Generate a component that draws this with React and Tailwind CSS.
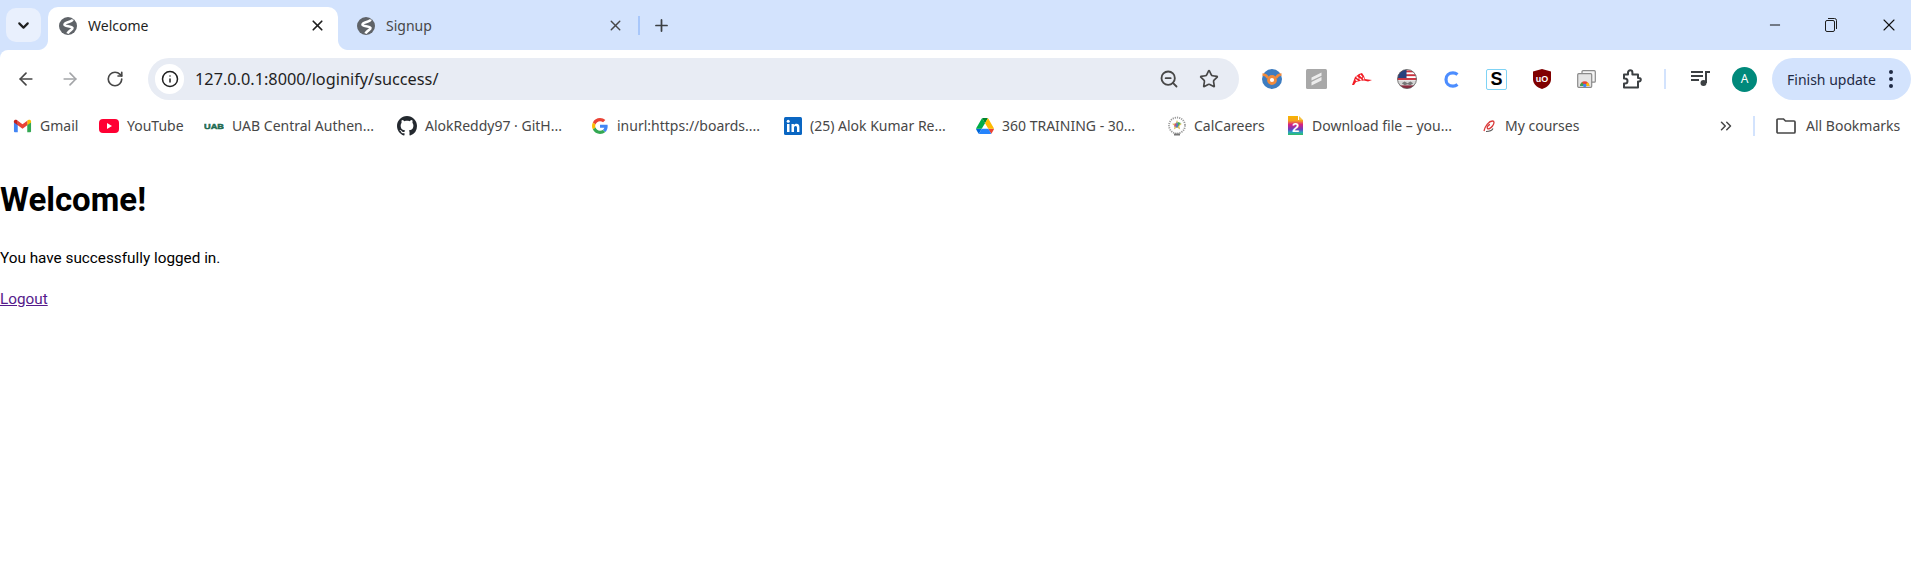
import React from "react";
import { ArrowLeft, ArrowRight, RotateCw, Info, ZoomOut, Star, X, Plus, ChevronDown, ChevronsRight, Minus } from "lucide-react";

const Globe = () => (
  <svg width="18" height="18" viewBox="0 0 18 18" className="shrink-0">
    <circle cx="9" cy="9" r="9" fill="#5f6368" />
    <path d="M13.500 2.500C13 5.500 6 4.500 5.500 7.500 5.200 10 12.500 8.500 13.500 11 13.800 13 10 13 8.500 16.500" fill="none" stroke="#fff" strokeWidth="2.600" />
  </svg>
);

const Gmail = () => (
  <svg width="19" height="14" viewBox="0 0 20 16" preserveAspectRatio="none">
    <path d="M1 15V3l4 3v9H2a1 1 0 0 1-1-1z" fill="#4285f4" />
    <path d="M19 15V3l-4 3v9h3a1 1 0 0 0 1-1z" fill="#34a853" />
    <path d="M15 1.800V7l4-3V2.500C19 1 17.200.3 16 1.200z" fill="#fbbc04" />
    <path d="M5 7V2l5 4 5-4v5l-5 4z" fill="#ea4335" />
    <path d="M1 2.500V4l4 3V2L4 1.200C2.800.3 1 1 1 2.500z" fill="#c5221f" />
  </svg>
);

const YouTube = () => (
  <svg width="20" height="14" viewBox="0 0 20 14">
    <rect width="20" height="14" rx="4" fill="#ff0033" />
    <path d="M8 4l5 3-5 3z" fill="#fff" />
  </svg>
);

const Uab = () => (
  <svg width="20" height="9" viewBox="0 0 20 9">
    <text x="10" y="7.500" textAnchor="middle" fontSize="8" fontWeight="900" fontFamily="Liberation Sans" fill="#1e6b52" stroke="#1e6b52" strokeWidth="0.500" textLength="20" lengthAdjust="spacingAndGlyphs">UAB</text>
  </svg>
);

const Github = () => (
  <svg width="20" height="20" viewBox="0 0 16 16" fill="#24292f">
    <path d="M8 0C3.580 0 0 3.580 0 8c0 3.540 2.290 6.530 5.470 7.590.4.070.55-.17.55-.38 0-.19-.01-.82-.01-1.490-2.010.37-2.530-.49-2.690-.94-.09-.23-.48-.94-.82-1.130-.28-.15-.68-.52-.01-.53.63-.01 1.080.58 1.230.82.72 1.210 1.870.87 2.330.66.070-.52.28-.87.51-1.070-1.780-.2-3.640-.89-3.640-3.950 0-.87.31-1.590.82-2.150-.08-.2-.36-1.020.08-2.120 0 0 .67-.21 2.200.82.64-.18 1.320-.27 2-.27s1.360.09 2 .27c1.530-1.040 2.200-.82 2.200-.82.44 1.100.16 1.920.08 2.120.51.56.82 1.270.82 2.150 0 3.070-1.870 3.750-3.650 3.950.29.25.54.73.54 1.480 0 1.070-.01 1.930-.01 2.200 0 .21.15.46.55.38A8.010 8.010 0 0 0 16 8c0-4.420-3.580-8-8-8z" />
  </svg>
);

const Google = () => (
  <svg width="16" height="16" viewBox="0 0 48 48">
    <path fill="#EA4335" d="M24 9.500c3.500 0 6.700 1.200 9.200 3.600l6.900-6.900C35.900 2.400 30.500 0 24 0 14.600 0 6.500 5.400 2.600 13.200l8 6.200C12.500 13.700 17.800 9.500 24 9.500z" />
    <path fill="#4285F4" d="M47 24.500c0-1.600-.2-3.100-.4-4.500H24v9h12.900c-.6 3-2.200 5.500-4.700 7.200l7.700 6c4.500-4.200 7.100-10.300 7.100-17.700z" />
    <path fill="#FBBC05" d="M10.500 28.600c-.5-1.400-.8-3-.8-4.600s.3-3.200.8-4.600l-8-6.200C.9 16.500 0 20.100 0 24s.9 7.500 2.600 10.800l7.900-6.200z" />
    <path fill="#34A853" d="M24 48c6.500 0 11.900-2.100 15.900-5.800l-7.700-6c-2.200 1.400-4.900 2.300-8.200 2.300-6.200 0-11.500-4.200-13.400-9.900l-8 6.200C6.500 42.600 14.600 48 24 48z" />
  </svg>
);

const LinkedIn = () => (
  <svg width="18" height="18" viewBox="0 0 18 18">
    <rect width="18" height="18" rx="1.500" fill="#0a66c2" />
    <rect x="3" y="7" width="2.500" height="8" fill="#fff" />
    <circle cx="4.200" cy="4.300" r="1.500" fill="#fff" />
    <path d="M7.500 7h2.400v1.200c.5-.8 1.400-1.400 2.600-1.400 2.200 0 2.900 1.400 2.900 3.500V15H13v-4.100c0-1-.3-1.900-1.400-1.900s-1.600.9-1.600 2V15H7.500z" fill="#fff" />
  </svg>
);

const Drive = () => (
  <svg width="18" height="16" viewBox="0 0 87 78">
    <path d="M6.600 66.900l3.900 6.700c.8 1.400 1.900 2.500 3.200 3.300L27.500 53H0c0 1.600.4 3.100 1.200 4.500z" fill="#0066da" />
    <path d="M43.600 25L29.900 1.200c-1.300.8-2.500 1.900-3.300 3.300L1.200 48.500C.4 49.900 0 51.400 0 53h27.500z" fill="#00ac47" />
    <path d="M73.500 76.800c1.300-.8 2.400-1.900 3.200-3.300l1.600-2.800 7.700-13.200c.8-1.400 1.200-2.900 1.200-4.500H59.700l5.900 11.500z" fill="#ea4335" />
    <path d="M43.600 25L57.400 1.200C56 .4 54.500 0 52.900 0H34.400c-1.600 0-3.100.4-4.500 1.200z" fill="#00832d" />
    <path d="M59.800 53H27.500L13.700 76.800c1.400.8 2.900 1.200 4.500 1.200h50.800c1.600 0 3.100-.4 4.500-1.200z" fill="#2684fc" />
    <path d="M73.400 26.500L60.700 4.500c-.8-1.400-1.900-2.500-3.300-3.300L43.600 25l16.200 28h27.500c0-1.600-.4-3.100-1.200-4.500z" fill="#ffba00" />
  </svg>
);

const CalCareers = () => (
  <svg width="18" height="20" viewBox="0 0 18 20">
    <circle cx="9" cy="9.500" r="8" fill="#fff" stroke="#9a9a9a" strokeWidth="1.800" strokeDasharray="1.200 1" />
    <path d="M9 4l1.500 3.500 3.500.3-2.700 2.300.9 3.400L9 11.600 5.800 13.500l.9-3.400L4 7.800l3.500-.3z" fill="#e0c060" />
    <path d="M9 6l2 3-2 3-2-2z" fill="#4a7fc1" />
    <path d="M7 7l2 2-3 2z" fill="#d04a7a" />
    <path d="M10 6l3 1-3 3z" fill="#4caf50" />
    <rect x="6" y="17.500" width="6" height="2" fill="#777" />
  </svg>
);

const Download2 = () => (
  <svg width="15" height="19" viewBox="0 0 15 19">
    <defs>
      <linearGradient id="dl" x1="0" y1="0" x2="0" y2="1">
        <stop offset="0" stopColor="#f7b500" />
        <stop offset="0.25" stopColor="#f5a020" />
        <stop offset="0.45" stopColor="#d9207f" />
        <stop offset="0.7" stopColor="#6a3fc0" />
        <stop offset="0.85" stopColor="#2aa5c0" />
        <stop offset="1" stopColor="#30c060" />
      </linearGradient>
    </defs>
    <path d="M0 0h10l5 4v15H0z" fill="url(#dl)" />
    <path d="M10 0h5v4h-5z" fill="#fff" />
    <path d="M11 0l4 4h-4z" fill="#f5c040" />
    <text x="7.500" y="15.500" textAnchor="middle" fontSize="13" fontWeight="700" fontFamily="Liberation Sans" fill="#fff">2</text>
  </svg>
);

const Courses = () => (
  <svg width="14" height="14" viewBox="0 0 14 14" fill="none">
    <path d="M2 12C3 7 7 2 10.500 2c2 0 2 2.500 0 5-1.500 2-4 3.500-5 2.500S6 6 8 5.500" stroke="#d93a3a" strokeWidth="1.300" />
    <path d="M4 12.500c3 0 6-1 7-3" stroke="#555" strokeWidth="1.100" />
  </svg>
);

const ExtOrange = () => (
  <svg width="20" height="20" viewBox="0 0 20 20">
    <circle cx="10" cy="10" r="10" fill="#3d7cc0" />
    <path d="M0.500 5.500C3 5.500 5 7 6 9M19.500 5.500C17 5.500 15 7 14 9" stroke="#f08a3c" strokeWidth="2.600" fill="none" />
    <circle cx="10" cy="11" r="3.500" fill="#fff" stroke="#f08a3c" strokeWidth="2.800" />
  </svg>
);

const ExtGray = () => (
  <svg width="21" height="20" viewBox="0 0 21 20">
    <rect width="21" height="20" rx="1.500" fill="#a8a8a8" />
    <path d="M5.500 8.500L15.500 3.500v3.200L5.500 11.500zM5.500 13L15.500 8v3.500L5.500 16.500z" fill="#ececec" />
  </svg>
);

const ExtFlag = () => (
  <svg width="20" height="12" viewBox="0 0 20 12">
    <path d="M0 12L3 4 7 1 10 0l2 3 1 3 3 .5L20 7l-4 1.500-4-1-4 .5-4 1-2 3z" fill="#f21c24" />
    <path d="M4.500 3.500l2 2M8 2l2 2M3.500 6.500l2 1.500M7.500 5.500l2 2M11 4.500l1 2" stroke="#fff" strokeWidth="1.100" />
  </svg>
);

const ExtUs = () => (
  <svg width="20" height="20" viewBox="0 0 21 21">
    <defs><clipPath id="usc"><circle cx="10.500" cy="10.500" r="10" /></clipPath></defs>
    <g clipPath="url(#usc)">
      <rect width="21" height="21" fill="#fff" />
      <rect y="1.500" width="21" height="2" fill="#c8313e" />
      <rect y="5.500" width="21" height="2" fill="#c8313e" />
      <rect y="9.500" width="21" height="2" fill="#c8313e" />
      <rect y="17" width="21" height="4" fill="#8c2a3e" />
      <rect width="10" height="9.500" fill="#27407e" />
      <rect y="12" width="21" height="5" fill="#d5d5d5" />
      <path d="M5 15l3-2 3 2 3-2 3 2-3 2-3-1-3 1z" fill="#777" />
    </g>
    <circle cx="10.500" cy="10.500" r="10" fill="none" stroke="#555" strokeWidth="0.800" />
  </svg>
);

const ExtC = () => (
  <svg width="15" height="17" viewBox="0 0 15 17" fill="none">
    <path d="M13.500 3.500C12 2.300 10.500 1.800 9 1.800 5 1.800 2 4.500 2 8.500s3 6.700 7 6.700c1.500 0 3-.5 4.500-1.700" stroke="#4c8dff" strokeWidth="3.200" />
  </svg>
);

const ExtS = () => (
  <div className="w-[21px] h-[21px] rounded-[2px] border border-[#7fd3f5] bg-white flex items-center justify-center">
    <span className="font-['Liberation_Sans',sans-serif] font-bold text-[18px] leading-none text-black">S</span>
  </div>
);

const ExtUo = () => (
  <svg width="18" height="20" viewBox="0 0 19 23" preserveAspectRatio="none">
    <path d="M9.500 0L19 3v9c0 5-4 9-9.500 11C4 21 0 17 0 12V3z" fill="#800000" />
    <text x="9.500" y="14.500" textAnchor="middle" fontSize="9.500" fontWeight="700" fontFamily="Liberation Sans" fill="#fff">uO</text>
  </svg>
);

const ExtChrome = () => (
  <svg width="19" height="18" viewBox="0 0 19 18">
    <rect x="5" y="0.700" width="13.300" height="11.500" rx="1" fill="#f4f4f4" stroke="#8a8a8a" strokeWidth="1.200" />
    <rect x="0.700" y="3.700" width="14" height="13.600" rx="1" fill="#e4e4e4" stroke="#8a8a8a" strokeWidth="1.200" />
    <path d="M3 16a4.700 4.700 0 0 1 9.400 0z" fill="#ea4335" />
    <path d="M3 16a4.700 4.700 0 0 1 2-3.800L7.700 16z" fill="#34a853" />
    <path d="M12.400 16a4.700 4.700 0 0 0-1.800-3.700L7.700 16z" fill="#fbbc04" />
    <circle cx="7.700" cy="15.500" r="1.700" fill="#4285f4" />
  </svg>
);

const ExtPuzzle = () => (
  <svg width="20" height="20" viewBox="0 0 20 20" fill="none" stroke="#3c4043" strokeWidth="2" strokeLinejoin="round">
    <path d="M2 5.500H6V3.500a2.200 2.200 0 0 1 4.400 0V5.500H16V9h1a1.800 1.800 0 0 1 0 3.600h-1V18.500H2V14.500h1a2.500 2.500 0 0 0 0-5H2Z" />
  </svg>
);

const MediaIcon = () => (
  <svg width="19" height="15" viewBox="0 0 19 15" fill="#3c4043">
    <rect x="0" y="0" width="12" height="2" />
    <rect x="0" y="4" width="12" height="2" />
    <rect x="0" y="8" width="8" height="2" />
    <rect x="14" y="0" width="2" height="12" />
    <rect x="14" y="0" width="5" height="2" />
    <circle cx="12.500" cy="12" r="3" />
  </svg>
);

const Restore = () => (
  <svg width="14" height="16" viewBox="0 0 14 16" fill="none" stroke="#1f1f1f" strokeWidth="1">
    <rect x="1.500" y="3.500" width="9" height="11" rx="1.500" />
    <path d="M4 1.500h6.500a2 2 0 0 1 2 2V12" />
  </svg>
);

const Folder = () => (
  <svg width="20" height="18" viewBox="0 0 20 18" fill="none" stroke="#474747" strokeWidth="1.700">
    <path d="M1 3a1 1 0 0 1 1-1h5.500l2 2H18a1 1 0 0 1 1 1v10a1 1 0 0 1-1 1H2a1 1 0 0 1-1-1z" />
  </svg>
);

const bookmarks = [
  { w: "w-[86px]", box: "w-[19px]", icon: <Gmail />, label: "Gmail" },
  { w: "w-[105px]", box: "w-5", icon: <YouTube />, label: "YouTube" },
  { w: "w-[193px]", box: "w-5", icon: <Uab />, label: "UAB Central Authen..." },
  { w: "w-[193px]", box: "w-5", icon: <Github />, label: "AlokReddy97 · GitH..." },
  { w: "w-[193px]", box: "w-[19px]", icon: <Google />, label: "inurl:https://boards...." },
  { w: "w-[192px]", box: "w-[19px]", icon: <LinkedIn />, label: "(25) Alok Kumar Re..." },
  { w: "w-[192px]", box: "w-[19px]", icon: <Drive />, label: "360 TRAINING - 30..." },
  { w: "w-[120px]", box: "w-[19px]", icon: <CalCareers />, label: "CalCareers" },
  { w: "w-[194px]", box: "w-[17px]", icon: <Download2 />, label: "Download file – you..." },
  { w: "w-[110px]", box: "w-4", icon: <Courses />, label: "My courses" },
];

const exts = [<ExtOrange />, <ExtGray />, <ExtFlag />, <ExtUs />, <ExtC />, <ExtS />, <ExtUo />, <ExtChrome />, <ExtPuzzle />];

function Tab({ title, active }) {
  return (
    <div className={active
      ? "relative w-[290px] h-[43px] pb-[6px] bg-white rounded-t-[10px] flex items-center pl-[11px] pr-[12px] text-[#1f1f1f]"
      : "w-[300px] h-[43px] pb-[6px] flex items-center pl-[19px] pr-[14px] text-[#474747]"}>
      <Globe />
      <span className="ml-[11px] flex-1 text-[14px]">{title}</span>
      <X size={17} strokeWidth={active ? 2.4 : 2} className={active ? "text-[#1f1f1f]" : "text-[#474747]"} />
      {active && <span className="absolute left-[-10px] bottom-0 w-[10px] h-[10px] bg-[radial-gradient(circle_at_0_0,#d3e3fd_9.5px,#ffffff_10.5px)]" />}
      {active && <span className="absolute right-[-10px] bottom-0 w-[10px] h-[10px] bg-[radial-gradient(circle_at_100%_0,#d3e3fd_9.5px,#ffffff_10.5px)]" />}
    </div>
  );
}

export default function App() {
  return (
    <div className="h-[572px] bg-[#d3e3fd] overflow-hidden font-['Noto_Sans',sans-serif]">
      {/* tab strip */}
      <div className="h-[50px] flex items-end">
        <div className="self-start mt-2 ml-[6px] w-[35px] h-[34px] rounded-[10px] bg-[#e9f0fd] flex items-center justify-center">
          <ChevronDown size={17} strokeWidth={3} className="text-[#1f1f1f]" />
        </div>
        <div className="ml-[7px]"><Tab title="Welcome" active /></div>
        <Tab title="Signup" />
        <div className="self-start mt-[16px] w-[2px] h-[19px] bg-[#a8c7fa]" />
        <div className="self-start mt-[16px] ml-[12px]"><Plus size={19} strokeWidth={2.2} className="text-[#3c4043]" /></div>
        <div className="self-start mt-[15px] ml-auto flex items-center h-[19px] text-[#111111]">
          <Minus size={16} strokeWidth={1.5} />
          <div className="ml-[41px]"><Restore /></div>
          <div className="ml-[41px] mr-[12px]"><X size={20} strokeWidth={1.3} /></div>
        </div>
      </div>

      {/* toolbar */}
      <div className="h-[58px] bg-white rounded-tl-[8px] pt-2 pl-1 pb-2 flex items-center">
        <div className="w-[44px] flex justify-center"><ArrowLeft size={20} strokeWidth={2} className="text-[#474747]" /></div>
        <div className="w-[44px] flex justify-center"><ArrowRight size={20} strokeWidth={2} className="text-[#a3a5a8]" /></div>
        <div className="w-[44px] pl-[2px] flex justify-center"><RotateCw size={18} strokeWidth={2.2} className="text-[#474747]" /></div>
        <div className="ml-3 w-[1091px] h-[42px] rounded-full bg-[#e8ecf4] flex items-center pl-[7px] pr-[20px]">
          <div className="w-[29px] h-[30px] rounded-full bg-white flex items-center justify-center">
            <Info size={18} strokeWidth={2} className="text-[#1f1f1f]" />
          </div>
          <span className="ml-[11px] flex-1 text-[16.3px] text-[#1f1f1f]">127.0.0.1:8000/loginify/success/</span>
          <ZoomOut size={20} strokeWidth={2.2} className="text-[#474747]" />
          <Star size={20} strokeWidth={2} className="ml-5 text-[#474747]" />
        </div>
        <div className="ml-[10px] flex">
          {exts.map((e, i) => (
            <div key={i} className="w-[45px] h-[30px] flex items-center justify-center">{e}</div>
          ))}
        </div>
        <div className="ml-[10px] w-[2px] h-[20px] bg-[#d3e3fd]" />
        <div className="ml-[25px] mb-[2px]"><MediaIcon /></div>
        <div className="ml-[22px] w-[25px] h-[25px] rounded-full bg-[#00897b] flex items-center justify-center text-white text-[12px]">A</div>
        <div className="ml-[15px] w-[139px] h-[42px] rounded-full bg-[#d3e3fd] flex items-center pl-[15px] text-[14px] text-[#1f2a44]">
          <span className="flex-1">Finish update</span>
          <span className="mr-[18px] flex flex-col gap-[3px]">
            <span className="w-[4px] h-[4px] rounded-full bg-[#1f2a44]" />
            <span className="w-[4px] h-[4px] rounded-full bg-[#1f2a44]" />
            <span className="w-[4px] h-[4px] rounded-full bg-[#1f2a44]" />
          </span>
        </div>
      </div>

      {/* bookmarks */}
      <div className="h-[36px] bg-white pl-[13px] pb-[1px] flex items-center text-[14px] text-[#474747]">
        {bookmarks.map((b) => (
          <div key={b.label} className={`${b.w} flex items-center gap-2 shrink-0`}>
            <span className={`${b.box} flex justify-center`}>{b.icon}</span>
            <span className="whitespace-nowrap">{b.label}</span>
          </div>
        ))}
        <ChevronsRight size={18} strokeWidth={2} className="ml-[126px] text-[#474747]" />
        <div className="ml-[18px] w-[2px] h-[20px] bg-[#d3e3fd]" />
        <div className="ml-[21px]"><Folder /></div>
        <span className="ml-[10px] whitespace-nowrap">All Bookmarks</span>
      </div>

      {/* page */}
      <div className="h-[428px] bg-white text-black font-['Roboto',sans-serif]">
        <h1 className="pt-[35px] text-[33px] font-bold leading-[42px]">Welcome!</h1>
        <p className="mt-[27px] text-[15.3px] leading-[21px]">You have successfully logged in.</p>
        <a href="#logout" className="block mt-[20px] w-fit text-[15.3px] leading-[21px] underline text-[#551a8b]">Logout</a>
      </div>
    </div>
  );
}
